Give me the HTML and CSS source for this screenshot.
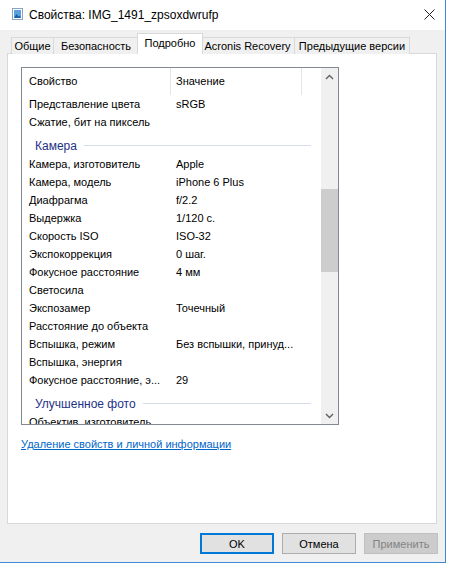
FILE: index.html
```html
<!DOCTYPE html>
<html lang="ru">
<head>
<meta charset="utf-8">
<title>Свойства: IMG_1491_zpsoxdwrufp</title>
<link rel="stylesheet" href="styles.css">
</head>
<body>
<div class="window">
  <div class="titlebar">
    <svg class="app-icon" width="11" height="12" viewBox="0 0 11 12">
      <rect x="0.5" y="0.5" width="10" height="11" fill="#ffffff" stroke="#8aa4c0"/>
      <rect x="2" y="2" width="7" height="8" fill="#5aa0e0"/>
      <path d="M2 10 L4.5 6 L6.5 8.5 L7.5 7.5 L9 10 Z" fill="#1f5fa8"/>
    </svg>
    <span class="title">Свойства: IMG_1491_zpsoxdwrufp</span>
    <svg class="close" width="11" height="11" viewBox="0 0 11 11">
      <path d="M0.5 0.5 L10.5 10.5 M10.5 0.5 L0.5 10.5" stroke="#222" stroke-width="1" fill="none"/>
    </svg>
  </div>
  <div class="client">
    <div class="tabs">
      <div class="tab tab-general">Общие</div>
      <div class="tab tab-security">Безопасность</div>
      <div class="tab tab-details active">Подробно</div>
      <div class="tab tab-acronis">Acronis Recovery</div>
      <div class="tab tab-versions">Предыдущие версии</div>
    </div>
    <div class="panel">
      <div class="listbox">
        <div class="list-main">
          <div class="list-head">
            <div class="hcell hname">Свойство</div>
            <div class="hcell hval">Значение</div>
            <div class="hcell hrest"></div>
          </div>
          <div class="row"><span class="name">Представление цвета</span><span class="val">sRGB</span></div>
          <div class="row"><span class="name">Сжатие, бит на пиксель</span><span class="val"></span></div>
          <div class="group"><span class="gtitle">Камера</span><span class="rule"></span></div>
          <div class="row"><span class="name">Камера, изготовитель</span><span class="val">Apple</span></div>
          <div class="row"><span class="name">Камера, модель</span><span class="val">iPhone 6 Plus</span></div>
          <div class="row"><span class="name">Диафрагма</span><span class="val">f/2.2</span></div>
          <div class="row"><span class="name">Выдержка</span><span class="val">1/120 с.</span></div>
          <div class="row"><span class="name">Скорость ISO</span><span class="val">ISO-32</span></div>
          <div class="row"><span class="name">Экспокоррекция</span><span class="val">0 шаг.</span></div>
          <div class="row"><span class="name">Фокусное расстояние</span><span class="val">4 мм</span></div>
          <div class="row"><span class="name">Светосила</span><span class="val"></span></div>
          <div class="row"><span class="name">Экспозамер</span><span class="val">Точечный</span></div>
          <div class="row"><span class="name">Расстояние до объекта</span><span class="val"></span></div>
          <div class="row"><span class="name">Вспышка, режим</span><span class="val">Без вспышки, принуд...</span></div>
          <div class="row"><span class="name">Вспышка, энергия</span><span class="val"></span></div>
          <div class="row"><span class="name">Фокусное расстояние, э...</span><span class="val">29</span></div>
          <div class="group"><span class="gtitle">Улучшенное фото</span><span class="rule"></span></div>
          <div class="row"><span class="name">Объектив, изготовитель</span><span class="val"></span></div>
        </div>
        <div class="vscroll">
          <div class="sarrow">
            <svg width="9" height="6" viewBox="0 0 9 6"><path d="M1 5 L4.5 1.5 L8 5" stroke="#606060" stroke-width="1.4" fill="none"/></svg>
          </div>
          <div class="strack"><div class="thumb"></div></div>
          <div class="sarrow">
            <svg width="9" height="6" viewBox="0 0 9 6"><path d="M1 1 L4.5 4.5 L8 1" stroke="#606060" stroke-width="1.4" fill="none"/></svg>
          </div>
        </div>
      </div>
      <a class="link" href="#">Удаление свойств и личной информации</a>
    </div>
    <div class="buttons">
      <button class="btn default">OK</button>
      <button class="btn">Отмена</button>
      <button class="btn disabled" disabled>Применить</button>
    </div>
  </div>
</div>
</body>
</html>
```
FILE: styles.css
```css
html, body {
  margin: 0;
  padding: 0;
  background: #ffffff;
}
body {
  font-family: "Liberation Sans", Arial, sans-serif;
  font-size: 11px;
  color: #000;
}
.window {
  width: 445px;
  height: 562px;
  border-right: 1px solid #3d8ad6;
  border-bottom: 1px solid #3d8ad6;
  display: flex;
  flex-direction: column;
}
.titlebar {
  height: 30px;
  background: #fff;
  display: flex;
  align-items: center;
  padding-left: 12px;
  box-sizing: border-box;
}
.app-icon { flex: none; margin-top: -2px; }
.title {
  margin-left: 6px;
  font-size: 12px;
  flex: 1;
}
.close { margin-right: 10px; margin-top: -2px; }
.client {
  flex: 1;
  background: #f0f0f0;
  display: flex;
  flex-direction: column;
}
.tabs {
  display: flex;
  align-items: flex-end;
  height: 20px;
  margin-top: 4px;
  padding-left: 11px;
  position: relative;
  z-index: 1;
}
.tab {
  box-sizing: border-box;
  height: 17px;
  border: 1px solid #d9d9d9;
  border-bottom: none;
  background: #f0f0f0;
  text-align: center;
  line-height: 16px;
  white-space: nowrap;
}
.tab + .tab { margin-left: -1px; }
.tab-general { width: 43px; }
.tab-security { width: 86px; }
.tab-details { width: 66px; }
.tab-acronis { width: 95px; }
.tab-versions { width: 116px; }
.tab.active {
  height: 21px;
  background: #fff;
  margin-left: -2px;
  margin-right: -2px;
  position: relative;
  z-index: 2;
  line-height: 18px;
}
.panel {
  box-sizing: border-box;
  margin: -1px 8px 0 7px;
  height: 471px;
  background: #fff;
  border: 1px solid #d9d9d9;
  padding: 13px 0 0 13px;
}
.listbox {
  box-sizing: border-box;
  width: 318px;
  height: 358px;
  border: 1px solid #828790;
  display: flex;
}
.list-main {
  flex: 1;
  overflow: hidden;
}
.list-head {
  display: flex;
  height: 27px;
  align-items: stretch;
}
.hcell {
  box-sizing: border-box;
  display: flex;
  align-items: center;
  padding-bottom: 2px;
}
.hname { width: 149px; padding-left: 7px; border-right: 1px solid #e5e5e5; }
.hval { width: 131px; padding-left: 5px; border-right: 1px solid #e5e5e5; }
.hrest { flex: 1; }
.row {
  display: flex;
  height: 18px;
  line-height: 18px;
  white-space: nowrap;
}
.name { width: 147px; padding-left: 7px; overflow: hidden; }
.val { padding-left: 0; }
.group {
  box-sizing: border-box;
  padding: 6px 10px 0 13px;
  display: flex;
  align-items: center;
  height: 24px;
}
.gtitle {
  color: #1e3287;
  font-size: 12px;
  line-height: 16px;
}
.rule {
  flex: 1;
  height: 1px;
  background: #d5dcea;
  margin-left: 7px;
  margin-top: -2px;
}
.vscroll {
  width: 17px;
  background: #f0f0f0;
  display: flex;
  flex-direction: column;
}
.sarrow {
  height: 17px;
  display: flex;
  align-items: center;
  justify-content: center;
}
.strack {
  flex: 1;
  padding-top: 104px;
}
.thumb {
  height: 83px;
  background: #cdcdcd;
}
.link {
  display: inline-block;
  margin-top: 12px;
  color: #0066cc;
  text-decoration: underline;
  line-height: 14px;
}
.buttons {
  display: flex;
  justify-content: flex-end;
  gap: 8px;
  margin-top: 9px;
  padding-right: 7px;
}
.btn {
  box-sizing: border-box;
  width: 74px;
  height: 21px;
  font: inherit;
  background: #e1e1e1;
  border: 1px solid #adadad;
  color: #000;
  padding: 0;
}
.btn.default {
  border: 2px solid #0078d7;
}
.btn.disabled {
  background: #cccccc;
  border-color: #bfbfbf;
  color: #838383;
}
```
